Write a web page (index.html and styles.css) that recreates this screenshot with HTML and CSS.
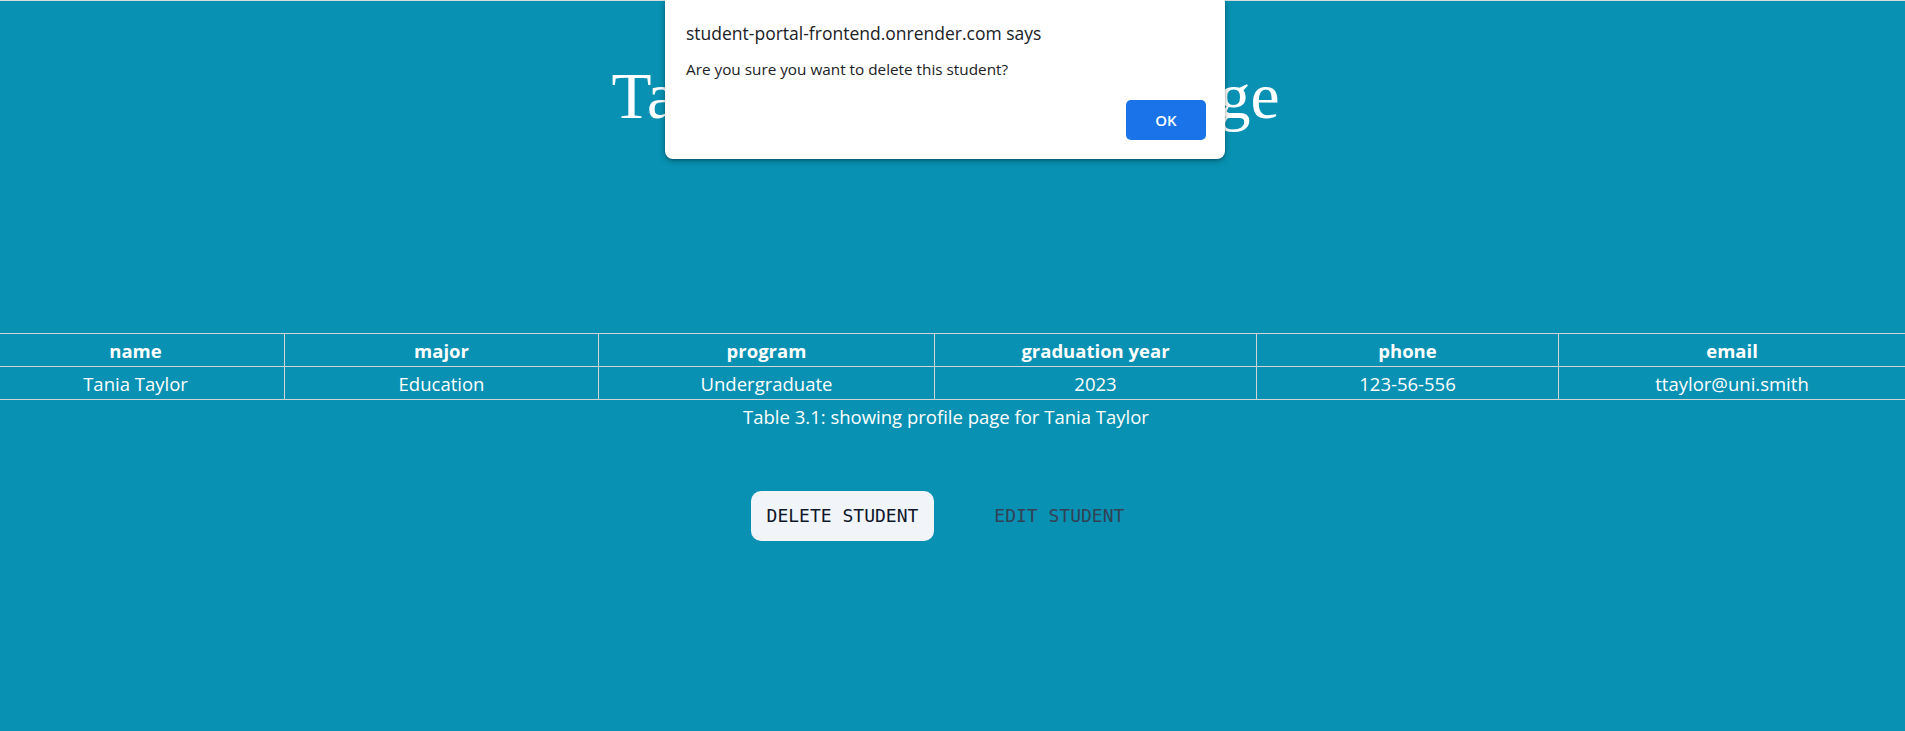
FILE: index.html
```html
<!DOCTYPE html>
<html lang="en">
<head>
<meta charset="utf-8">
<title>Tania Taylor Profile Page</title>
<link rel="stylesheet" href="styles.css">
</head>
<body>
<div class="topline"></div>
<main class="page">
  <h1 class="title">Tania Taylor Profile Page</h1>
  <table class="profile">
    <colgroup>
      <col class="c1"><col class="c2"><col class="c3"><col class="c4"><col class="c5"><col class="c6">
    </colgroup>
    <thead>
      <tr><th>name</th><th>major</th><th>program</th><th>graduation year</th><th>phone</th><th>email</th></tr>
    </thead>
    <tbody>
      <tr><td>Tania Taylor</td><td>Education</td><td>Undergraduate</td><td>2023</td><td>123-56-556</td><td>ttaylor@uni.smith</td></tr>
    </tbody>
    <caption>Table 3.1: showing profile page for Tania Taylor</caption>
  </table>
  <div class="actions">
    <button class="btn btn-delete">DELETE STUDENT</button>
    <button class="btn btn-edit">EDIT STUDENT</button>
  </div>
</main>
<div class="dialog">
  <div class="dialog-title">student-portal-frontend.onrender.com says</div>
  <div class="dialog-msg">Are you sure you want to delete this student?</div>
  <div class="dialog-foot"><button class="ok">OK</button></div>
</div>
</body>
</html>
```
FILE: styles.css
```css
html, body {
  margin: 0;
  padding: 0;
}
body {
  background: #0891b2;
  width: 1905px;
  height: 731px;
  overflow: hidden;
  position: relative;
}
.topline {
  height: 1px;
  background: #dcdcdc;
}
/* the document is slightly wider than the window and scrolled by 14px */
.page {
  margin-left: -14px;
  width: 1919px;
  display: flex;
  flex-direction: column;
  align-items: stretch;
}
.title {
  margin: 58px 0 0;
  font-family: "Liberation Serif", "Times New Roman", serif;
  font-weight: normal;
  font-size: 65.5px;
  line-height: 75px;
  color: #ffffff;
  text-align: center;
}
.profile {
  margin-top: 199px;
  width: 1919px;
  table-layout: fixed;
  border-collapse: collapse;
  font-family: "Open Sans", "Noto Sans", sans-serif;
  color: #ffffff;
  font-size: 18.5px;
}
.c1 { width: 298px; }
.c2 { width: 314px; }
.c3 { width: 336px; }
.c4 { width: 322px; }
.c5 { width: 302px; }
.c6 { width: 347px; }
.profile th, .profile td {
  border: 1px solid #d4d4d4;
  text-align: center;
  padding: 2px 0 0;
  height: 30px;
  line-height: 30px;
}
.profile th {
  font-weight: 700;
}
.profile caption {
  caption-side: bottom;
  padding-top: 2px;
  line-height: 30px;
  font-size: 18.5px;
}
.actions {
  margin-top: 59px;
  display: flex;
  justify-content: center;
  gap: 44px;
}
.btn {
  font-family: "DejaVu Sans Mono", "Liberation Mono", monospace;
  font-size: 18px;
  line-height: 30px;
  padding: 10px 16px;
  border: none;
  border-radius: 10px;
  background: transparent;
  color: #334155;
  cursor: pointer;
}
.btn-delete {
  background: #f1f5f9;
  color: #0f172a;
}
.dialog {
  position: absolute;
  top: 0;
  left: 665px;
  width: 560px;
  height: 159px;
  box-sizing: border-box;
  background: #ffffff;
  border-radius: 0 0 8px 8px;
  box-shadow: 0 2px 6px rgba(0, 0, 0, 0.3), 0 1px 2px rgba(0, 0, 0, 0.2);
  padding: 21px 20px 0 21px;
  font-family: "Open Sans", "Noto Sans", sans-serif;
  color: #202124;
  display: flex;
  flex-direction: column;
}
.dialog-title {
  font-size: 17.5px;
  line-height: 24px;
}
.dialog-msg {
  font-size: 15.3px;
  line-height: 20px;
  margin-top: 14px;
}
.dialog-foot {
  display: flex;
  justify-content: flex-end;
  margin-top: 21px;
}
.ok {
  width: 80px;
  height: 40px;
  border: none;
  border-radius: 5px;
  background: #1a73e8;
  color: #ffffff;
  font-family: "Open Sans", "Noto Sans", sans-serif;
  font-weight: 600;
  font-size: 15px;
  margin-right: -1px;
}
```
